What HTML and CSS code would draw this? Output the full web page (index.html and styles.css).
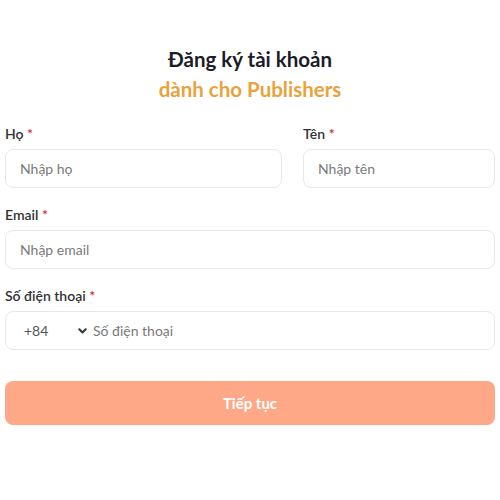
FILE: index.html
```html
<!DOCTYPE html>
<html lang="vi">
<head>
<meta charset="utf-8">
<link rel="stylesheet" href="styles.css">
</head>
<body>
<div class="page">
  <header class="head">
    <h1 class="title">Đăng ký tài khoản</h1>
    <p class="subtitle">dành cho Publishers</p>
  </header>
  <form class="form">
    <div class="row">
      <div class="field">
        <label class="label">Họ <span class="req">*</span></label>
        <div class="input"><span class="ph">Nhập họ</span></div>
      </div>
      <div class="field">
        <label class="label">Tên <span class="req">*</span></label>
        <div class="input"><span class="ph">Nhập tên</span></div>
      </div>
    </div>
    <div class="field">
      <label class="label">Email <span class="req">*</span></label>
      <div class="input"><span class="ph">Nhập email</span></div>
    </div>
    <div class="field">
      <label class="label">Số điện thoại <span class="req">*</span></label>
      <div class="input phone">
        <span class="code">+84</span>
        <svg class="chev" width="9" height="6" viewBox="0 0 9 6"><path d="M1.3 1.3 L4.5 4.5 L7.7 1.3" fill="none" stroke="#333" stroke-width="2" stroke-linecap="round" stroke-linejoin="round"/></svg>
        <span class="ph">Số điện thoại</span>
      </div>
    </div>
    <button type="button" class="btn">Tiếp tục</button>
  </form>
</div>
</body>
</html>
```
FILE: styles.css
```css
* { box-sizing: border-box; }
html, body { margin: 0; padding: 0; background: #fff; }
body { font-family: "Lato", "Open Sans", sans-serif; color: #2b2b2b; }
.page { padding: 45px 5px 0 5px; }
.head { text-align: center; }
.title { margin: 0; font-size: 20.5px; font-weight: 700; color: #1c1c28; line-height: 28px; }
.subtitle { margin: 2px 0 0 0; font-size: 20.5px; font-weight: 700; color: #e8a33c; line-height: 28px; }
.form { margin-top: 21px; display: flex; flex-direction: column; }
.row { display: grid; grid-template-columns: 277px 1fr; column-gap: 21px; }
.field { display: flex; flex-direction: column; margin-bottom: 17px; }
.label { font-size: 14px; font-weight: 600; color: #333; line-height: 20px; margin-bottom: 5px; }
.req { color: #d7262d; }
.input { height: 39px; border: 1px solid #e8e8e8; border-radius: 8px; display: flex; align-items: center; padding: 0 14px; font-size: 14px; }
.ph { color: #7a7a7a; }
.phone { padding-left: 18px; }
.code { color: #555; width: 54px; }
.chev { margin-right: 6px; }
.btn { margin-top: 14px; height: 44px; border: none; border-radius: 8px; background: #fea887; color: #fff; font-family: inherit; font-size: 15px; font-weight: 700; width: 100%; }
```
